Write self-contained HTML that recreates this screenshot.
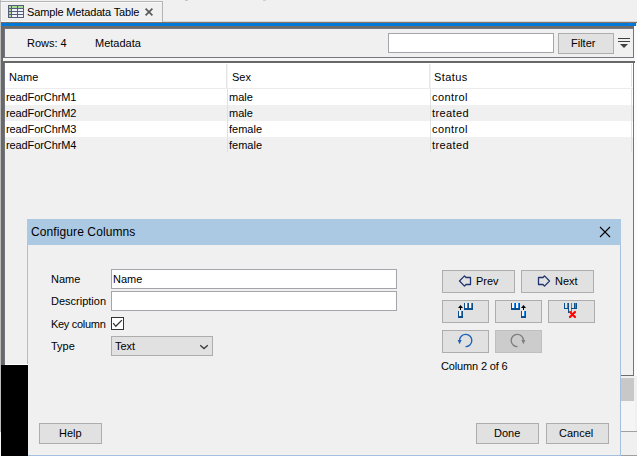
<!DOCTYPE html>
<html><head><meta charset="utf-8"><style>
*{box-sizing:border-box;margin:0;padding:0}
html,body{width:637px;height:456px;overflow:hidden;background:#f0f0f0;font-family:"Liberation Sans",sans-serif;font-size:11px;color:#000}
.a{position:absolute}
.t{position:absolute;white-space:nowrap;line-height:13px}
.btn{position:absolute;background:#e1e1e1;border:1px solid #adadad}
.inp{position:absolute;background:#fff;border:1px solid #a3a5ab}
svg{position:absolute;overflow:visible}
</style></head><body>
<!-- top frame / tab -->
<div class="a" style="left:185px;top:0;width:3px;height:1px;background:#c8c8c8"></div><div class="a" style="left:263px;top:0;width:3px;height:1px;background:#d0d0d0"></div>
<div class="a" style="left:0;top:0;width:1px;height:432px;background:#bcbcbc"></div><div class="a" style="left:0;top:432px;width:1px;height:24px;background:#f8f8f8"></div>
<div class="a" style="left:0;top:1px;width:163px;height:1px;background:#b4b4b4"></div>
<div class="a" style="left:162px;top:1px;width:1px;height:21px;background:#b4b4b4"></div>
<div class="a" style="left:1px;top:2px;width:161px;height:1px;background:#f8f8f8"></div>
<div class="a" style="left:1px;top:2px;width:1px;height:20px;background:#f8f8f8"></div>
<svg style="left:8px;top:5px" width="16" height="13" viewBox="0 0 16 13">
<rect x="0" y="0" width="16" height="13" fill="#5b5b7e"/>
<rect x="1" y="1" width="2" height="2" fill="#a6dc96"/><rect x="4" y="1" width="5" height="2" fill="#a6dc96"/><rect x="10" y="1" width="5" height="2" fill="#a6dc96"/>
<rect x="1" y="4" width="2" height="2" fill="#a6dc96"/><rect x="4" y="4" width="5" height="2" fill="#eef3fc"/><rect x="10" y="4" width="5" height="2" fill="#eef3fc"/>
<rect x="1" y="7" width="2" height="2" fill="#a6dc96"/><rect x="4" y="7" width="5" height="2" fill="#eef3fc"/><rect x="10" y="7" width="5" height="2" fill="#eef3fc"/>
<rect x="1" y="10" width="2" height="2" fill="#a6dc96"/><rect x="4" y="10" width="5" height="2" fill="#eef3fc"/><rect x="10" y="10" width="5" height="2" fill="#eef3fc"/>
</svg>
<div class="t" style="left:27px;top:6px;letter-spacing:-0.15px">Sample Metadata Table</div>
<svg style="left:145px;top:8px" width="8" height="8" viewBox="0 0 8 8"><path d="M0.6 0.6L7.4 7.4M7.4 0.6L0.6 7.4" stroke="#5a5a5a" stroke-width="1.7"/></svg>
<!-- blue bar and frame -->
<div class="a" style="left:163px;top:21px;width:474px;height:1px;background:#d8d8d8"></div><div class="a" style="left:1px;top:21px;width:161px;height:1px;background:#f8f8f8"></div>
<div class="a" style="left:1px;top:22px;width:636px;height:1px;background:#7d7265"></div>
<div class="a" style="left:2px;top:23px;width:634px;height:3px;background:#0078d7"></div>
<div class="a" style="left:1px;top:26px;width:634px;height:1px;background:#756d62"></div>
<div class="a" style="left:1px;top:27px;width:633px;height:1px;background:#6a6a6a"></div>
<div class="a" style="left:634px;top:26px;width:3px;height:350px;background:#fcfcfc"></div>
<div class="a" style="left:1px;top:22px;width:1px;height:4px;background:#686868"></div><div class="a" style="left:1px;top:26px;width:3px;height:339px;background:#686868"></div>
<!-- toolbar -->
<div class="a" style="left:4px;top:28px;width:630px;height:30px;border:1px solid #72757e"></div>
<div class="t" style="left:27px;top:37px">Rows: 4</div>
<div class="t" style="left:95px;top:37px">Metadata</div>
<div class="inp" style="left:388px;top:33px;width:166px;height:20px"></div>
<div class="btn" style="left:558px;top:33px;width:56px;height:21px"></div>
<div class="t" style="left:571px;top:37px">Filter</div>
<svg style="left:618px;top:38px" width="12" height="11" viewBox="0 0 12 11"><rect x="0" y="0" width="12" height="1" fill="#404040"/><rect x="0" y="3" width="12" height="1" fill="#404040"/><path d="M2 6H10L6 10Z" fill="#404040"/></svg>
<div class="a" style="left:3px;top:58px;width:632px;height:3px;background:#f6f6f6"></div>
<div class="a" style="left:3px;top:61px;width:632px;height:2px;background:#686868"></div>
<!-- table -->
<div class="a" style="left:4px;top:63px;width:630px;height:312px;background:#f0f0f0;border-left:1px solid #72757e;border-right:1px solid #72757e"></div>
<div class="a" style="left:5px;top:63px;width:628px;height:25px;background:#fff"></div>
<div class="a" style="left:5px;top:88px;width:628px;height:1px;background:#ececec"></div>
<div class="a" style="left:5px;top:89px;width:628px;height:16px;background:#fff"></div>
<div class="a" style="left:5px;top:121px;width:628px;height:16px;background:#fff"></div>
<div class="a" style="left:226px;top:64px;width:1px;height:24px;background:#e6e6e6"></div><div class="a" style="left:227px;top:64px;width:1px;height:24px;background:#f2f2f2"></div>
<div class="a" style="left:429px;top:64px;width:1px;height:24px;background:#e6e6e6"></div><div class="a" style="left:430px;top:64px;width:1px;height:24px;background:#f2f2f2"></div>
<div class="a" style="left:227px;top:89px;width:1px;height:63px;background:#e0e0e0"></div>
<div class="a" style="left:430px;top:89px;width:1px;height:63px;background:#e0e0e0"></div>
<div class="a" style="left:631px;top:64px;width:1px;height:23px;background:#e3e3e3"></div><div class="a" style="left:631px;top:89px;width:1px;height:63px;background:#e3e3e3"></div>
<div class="t" style="left:9px;top:71px">Name</div>
<div class="t" style="left:232px;top:71px">Sex</div>
<div class="t" style="left:434px;top:71px;letter-spacing:0.4px">Status</div>
<div class="t" style="left:6px;top:91px;letter-spacing:-0.1px">readForChrM1</div>
<div class="t" style="left:6px;top:107px;letter-spacing:-0.1px">readForChrM2</div>
<div class="t" style="left:6px;top:123px;letter-spacing:-0.1px">readForChrM3</div>
<div class="t" style="left:6px;top:139px;letter-spacing:-0.1px">readForChrM4</div>
<div class="t" style="left:229px;top:91px">male</div>
<div class="t" style="left:229px;top:107px">male</div>
<div class="t" style="left:229px;top:123px">female</div>
<div class="t" style="left:229px;top:139px">female</div>
<div class="t" style="left:432px;top:91px;letter-spacing:0.4px">control</div>
<div class="t" style="left:432px;top:107px;letter-spacing:0.4px">treated</div>
<div class="t" style="left:432px;top:123px;letter-spacing:0.4px">control</div>
<div class="t" style="left:432px;top:139px;letter-spacing:0.4px">treated</div>
<!-- right area under panel -->
<div class="a" style="left:621px;top:375px;width:13px;height:1px;background:#6d6d6d"></div>
<div class="a" style="left:621px;top:378px;width:13px;height:23px;background:#c8c8c8"></div>
<div class="a" style="left:621px;top:401px;width:14px;height:30px;background:#f5f5f5"></div><div class="a" style="left:621px;top:431px;width:16px;height:1px;background:#a0a0a0"></div>
<!-- dialog -->
<div class="a" style="left:27px;top:219px;width:594px;height:237px;background:#f0f0f0;border:1px solid #a4c0de;border-top:none"></div>
<div class="a" style="left:27px;top:219px;width:594px;height:26px;background:#acc9e3"></div>
<div class="a" style="left:5px;top:364px;width:23px;height:1px;background:#fff"></div>
<div class="a" style="left:1px;top:365px;width:27px;height:91px;background:#000"></div>
<div class="a" style="left:621px;top:455px;width:16px;height:1px;background:#a0a0a0"></div>
<div class="t" style="left:31px;top:225px;font-size:12px;line-height:14px;letter-spacing:0.1px">Configure Columns</div>
<svg style="left:600px;top:227px" width="10" height="10" viewBox="0 0 10 10"><path d="M0 0L10 10M10 0L0 10" stroke="#000" stroke-width="1.1"/></svg>
<div class="t" style="left:51px;top:273px">Name</div>
<div class="t" style="left:51px;top:295px">Description</div>
<div class="t" style="left:51px;top:318px;letter-spacing:-0.3px">Key column</div>
<div class="t" style="left:51px;top:340px">Type</div>
<div class="inp" style="left:111px;top:269px;width:286px;height:20px"></div>
<div class="t" style="left:113px;top:273px">Name</div>
<div class="inp" style="left:111px;top:291px;width:286px;height:20px"></div>
<div class="a" style="left:111px;top:317px;width:13px;height:13px;background:#fff;border:1px solid #333"></div>
<svg style="left:111px;top:317px" width="13" height="13" viewBox="0 0 13 13"><path d="M2.2 6.2L4.8 9.3L10.9 3.1" fill="none" stroke="#333" stroke-width="1.3"/></svg>
<div class="btn" style="left:111px;top:336px;width:102px;height:20px"></div>
<div class="t" style="left:115px;top:340px">Text</div>
<svg style="left:199px;top:344px" width="10" height="6" viewBox="0 0 10 6"><path d="M1.2 1.2L5 4.6L8.8 1.2" fill="none" stroke="#3a3a3a" stroke-width="1.3"/></svg>
<!-- right buttons -->
<div class="btn" style="left:442px;top:270px;width:73px;height:23px"></div>
<div class="btn" style="left:521px;top:270px;width:73px;height:23px"></div>
<svg style="left:0;top:0" width="637" height="456">
<path d="M459.5 281L464.5 275.9L466 277.5H470.5V284.5H466L464.5 286.1Z" fill="none" stroke="#1f3470" stroke-width="1.3" stroke-linejoin="round"/>
<path d="M549.5 281L544.5 275.9L543 277.5H538.5V284.5H543L544.5 286.1Z" fill="none" stroke="#1f3470" stroke-width="1.3" stroke-linejoin="round"/>
</svg>
<div class="t" style="left:476px;top:275px">Prev</div>
<div class="t" style="left:555px;top:275px">Next</div>
<div class="btn" style="left:442px;top:300px;width:47px;height:23px"></div>
<div class="btn" style="left:495px;top:300px;width:47px;height:23px"></div>
<div class="btn" style="left:548px;top:300px;width:47px;height:23px"></div>
<svg style="left:0;top:0" width="637" height="456" shape-rendering="crispEdges">
<!-- icon 1: arrow + u lower left, ш upper right -->
<path d="M458 308H463L460.5 305Z" fill="#000" shape-rendering="auto"/><rect x="460" y="307" width="1" height="3" fill="#000"/>
<g transform="translate(458,311)"><rect x="0" y="0" width="1" height="7" fill="#0b4f8e"/><rect x="1" y="0" width="2" height="5" fill="#fdf2ec"/><rect x="3" y="0" width="1" height="5" fill="#1f8ef0"/><rect x="4" y="0" width="1" height="7" fill="#0b4f8e"/><rect x="0" y="5" width="5" height="2" fill="#0b4f8e"/></g>
<g transform="translate(464,303)"><rect x="0" y="0" width="1" height="7" fill="#0b4f8e"/><rect x="1" y="0" width="2" height="5" fill="#fdf2ec"/><rect x="3" y="0" width="1" height="5" fill="#1f8ef0"/><rect x="4" y="0" width="1" height="7" fill="#0b4f8e"/><rect x="5" y="0" width="2" height="5" fill="#fdf2ec"/><rect x="7" y="0" width="1" height="5" fill="#1f8ef0"/><rect x="8" y="0" width="1" height="7" fill="#0b4f8e"/><rect x="0" y="5" width="9" height="2" fill="#0b4f8e"/></g>
<!-- icon 2 -->
<g transform="translate(511,303)"><rect x="0" y="0" width="1" height="7" fill="#0b4f8e"/><rect x="1" y="0" width="2" height="5" fill="#fdf2ec"/><rect x="3" y="0" width="1" height="5" fill="#1f8ef0"/><rect x="4" y="0" width="1" height="7" fill="#0b4f8e"/><rect x="5" y="0" width="2" height="5" fill="#fdf2ec"/><rect x="7" y="0" width="1" height="5" fill="#1f8ef0"/><rect x="8" y="0" width="1" height="7" fill="#0b4f8e"/><rect x="0" y="5" width="9" height="2" fill="#0b4f8e"/></g>
<path d="M521 308H526L523.5 305Z" fill="#000" shape-rendering="auto"/><rect x="523" y="307" width="1" height="3" fill="#000"/>
<g transform="translate(521,311)"><rect x="0" y="0" width="1" height="7" fill="#0b4f8e"/><rect x="1" y="0" width="2" height="5" fill="#fdf2ec"/><rect x="3" y="0" width="1" height="5" fill="#1f8ef0"/><rect x="4" y="0" width="1" height="7" fill="#0b4f8e"/><rect x="0" y="5" width="5" height="2" fill="#0b4f8e"/></g>
<!-- icon 3 delete -->
<rect x="564" y="303" width="1" height="6" fill="#0b4f8e"/><rect x="564" y="308" width="5" height="1" fill="#0b4f8e"/>
<rect x="567" y="303" width="1" height="5" fill="#1f8ef0"/>
<rect x="568" y="303" width="1" height="10" fill="#0b4f8e"/><rect x="571" y="303" width="1" height="9" fill="#1f8ef0"/>
<rect x="574" y="303" width="1" height="6" fill="#0b4f8e"/><rect x="575" y="303" width="1" height="5" fill="#1f8ef0"/><rect x="576" y="303" width="1" height="6" fill="#0b4f8e"/><rect x="571" y="308" width="6" height="1" fill="#0b4f8e"/>
<path d="M570 312L575 317M575 312L570 317" stroke="#ff0000" stroke-width="2.2" stroke-linecap="round" shape-rendering="auto"/>
</svg>
<div class="btn" style="left:442px;top:330px;width:47px;height:23px"></div>
<div class="btn" style="left:495px;top:330px;width:47px;height:23px;background:#cccccc;border-color:#bfbfbf"></div>
<svg style="left:0;top:0" width="637" height="456">
<path d="M465.5 346.6A6.1 6.1 0 1 0 459.6 340.3" fill="none" stroke="#1f63b8" stroke-width="1.4"/>
<path d="M457.6 340H461.6L459.6 344.3Z" fill="#1f63b8"/>
<path d="M517.5 346.6A6.1 6.1 0 1 1 523.4 340.3" fill="none" stroke="#7f7f7f" stroke-width="1.4"/>
<path d="M521.4 340H525.4L523.4 344.3Z" fill="#7f7f7f"/>
</svg>
<div class="t" style="left:441px;top:360px;letter-spacing:-0.15px">Column 2 of 6</div>
<div class="btn" style="left:39px;top:423px;width:63px;height:21px"></div>
<div class="t" style="left:59px;top:427px">Help</div>
<div class="btn" style="left:476px;top:423px;width:63px;height:21px"></div>
<div class="t" style="left:494px;top:427px">Done</div>
<div class="btn" style="left:546px;top:423px;width:63px;height:21px"></div>
<div class="t" style="left:559px;top:427px">Cancel</div>
</body></html>
